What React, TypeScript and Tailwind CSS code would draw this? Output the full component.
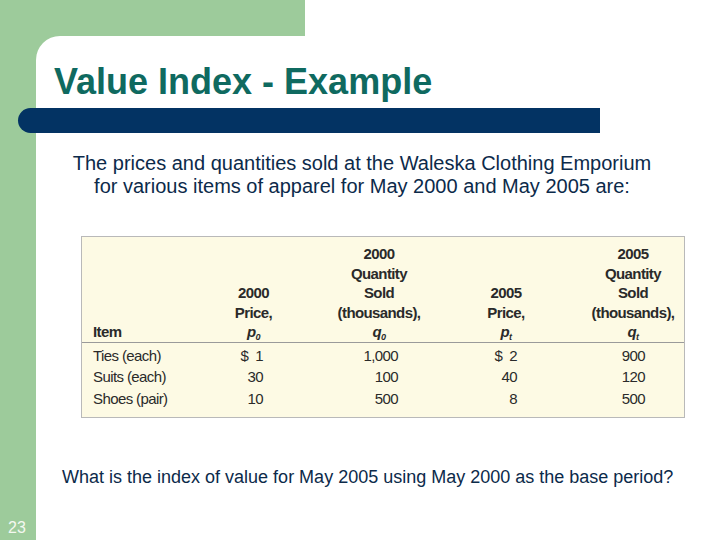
const rows = [
  { item: "Ties (each)", p0: "$  1", q0: "1,000", pt: "$  2", qt: "900" },
  { item: "Suits (each)", p0: "30", q0: "100", pt: "40", qt: "120" },
  { item: "Shoes (pair)", p0: "10", q0: "500", pt: "8", qt: "500" },
];

function Sym({ base, sub }: { base: string; sub: string }) {
  return (
    <span className="italic">
      {base}
      <sub className="text-[9px] align-baseline relative top-[3px]">{sub}</sub>
    </span>
  );
}

export default function App() {
  const cols = "grid grid-cols-[119px_105px_146px_108px_126px]";
  return (
    <div className="w-[720px] h-[540px] flex flex-col bg-white overflow-hidden font-['Liberation_Sans',Arial,sans-serif]">
      <div className="w-[305px] h-[36px] shrink-0 bg-[#9dcb9b]" />
      <div className="flex flex-1 bg-[#9dcb9b]">
        {/* left strip with page number */}
        <div className="w-[36px] shrink-0 flex flex-col justify-end pb-[3px] pl-[8px]">
          <span className="text-[16px] leading-[18px] text-[#f4f8f0]">23</span>
        </div>

        <div className="flex-1 bg-white rounded-tl-[24px] flex flex-col">
          <h1 className="pl-[18px] pt-[25px] text-[36px] leading-[41px] font-bold text-[#0f6a60]">
            Value Index - Example
          </h1>
          <div className="-ml-[18px] mt-[6px] w-[582px] h-[25px] bg-[#033363] rounded-l-full" />

          <p className="mt-[19px] ml-[12px] w-[628px] text-center text-[20px] leading-[23px] text-[#0c2a4a]">
            The prices and quantities sold at the Waleska Clothing Emporium
            <br />
            for various items of apparel for May 2000 and May 2005 are:
          </p>

          {/* table */}
          <div className="mt-[38px] ml-[45px] w-[604px] bg-[#fdfae4] border border-[#b9b9b9] text-[#2a2a2a] text-[15px] tracking-[-0.6px]">
            <div className={`${cols} items-end pt-[7px] pb-0 leading-[19.5px] font-bold border-b border-[#9a9a9a]`}>
              <div className="pl-[11px]">Item</div>
              <div className="text-center">
                2000<br />Price,<br /><Sym base="p" sub="0" />
              </div>
              <div className="text-center">
                2000<br />Quantity<br />Sold<br />(thousands),<br /><Sym base="q" sub="0" />
              </div>
              <div className="text-center">
                2005<br />Price,<br /><Sym base="p" sub="t" />
              </div>
              <div className="text-center pl-[20px]">
                2005<br />Quantity<br />Sold<br />(thousands),<br /><Sym base="q" sub="t" />
              </div>
            </div>
            <div className="pt-[2px] pb-[8px] leading-[21.6px]">
              {rows.map((r) => (
                <div key={r.item} className={cols}>
                  <div className="pl-[11px]">{r.item}</div>
                  <div className="text-right pr-[43px] whitespace-pre">{r.p0}</div>
                  <div className="text-right pr-[54px]">{r.q0}</div>
                  <div className="text-right pr-[43px] whitespace-pre">{r.pt}</div>
                  <div className="text-right pr-[41px]">{r.qt}</div>
                </div>
              ))}
            </div>
          </div>

          <p className="mt-[48px] ml-[26px] text-[18px] leading-[22px] text-[#0c2a4a]">
            What is the index of value for May 2005 using May 2000 as the base period?
          </p>
        </div>
      </div>
    </div>
  );
}
